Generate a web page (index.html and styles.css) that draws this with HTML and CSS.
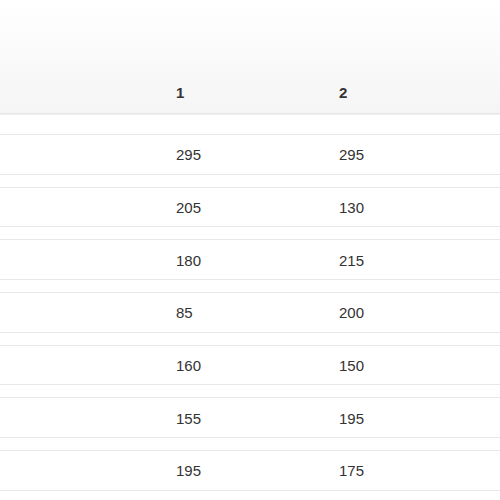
FILE: index.html
```html
<!DOCTYPE html>
<html>
<head>
<meta charset="utf-8">
<link rel="stylesheet" href="styles.css">
</head>
<body>
<div class="table">
  <div class="head">
    <div class="cell first"></div>
    <div class="cell">1</div>
    <div class="cell">2</div>
  </div>
  <div class="body">
    <div class="row"><div class="cell first"></div><div class="cell">295</div><div class="cell">295</div></div>
    <div class="row"><div class="cell first"></div><div class="cell">205</div><div class="cell">130</div></div>
    <div class="row"><div class="cell first"></div><div class="cell">180</div><div class="cell">215</div></div>
    <div class="row"><div class="cell first"></div><div class="cell">85</div><div class="cell">200</div></div>
    <div class="row"><div class="cell first"></div><div class="cell">160</div><div class="cell">150</div></div>
    <div class="row"><div class="cell first"></div><div class="cell">155</div><div class="cell">195</div></div>
    <div class="row"><div class="cell first"></div><div class="cell">195</div><div class="cell">175</div></div>
  </div>
</div>
</body>
</html>
```
FILE: styles.css
```css
html, body {
  margin: 0;
  padding: 0;
  background: #fff;
}
body {
  font-family: "Liberation Sans", Arial, sans-serif;
  font-size: 15px;
  color: #333;
  overflow: hidden;
}
.table {
  width: 500px;
}
.head {
  display: grid;
  grid-template-columns: 176px 163px 161px;
  align-items: end;
  height: 114px;
  box-sizing: border-box;
  padding-bottom: 11px;
  background: linear-gradient(to bottom, #ffffff 0%, #f5f5f5 100%);
  border-bottom: 1px solid #e6e6e6;
  box-shadow: 0 1px 0 #f0f0f0;
  font-weight: bold;
}
.body {
  padding-top: 20px;
}
.row {
  display: grid;
  grid-template-columns: 176px 163px 161px;
  align-items: center;
  height: 40.67px;
  box-sizing: border-box;
  padding-top: 2px;
  border-top: 1px solid #e8e8e8;
  border-bottom: 1px solid #e8e8e8;
  margin-bottom: 12px;
}
.cell {
  line-height: 18px;
}
```
